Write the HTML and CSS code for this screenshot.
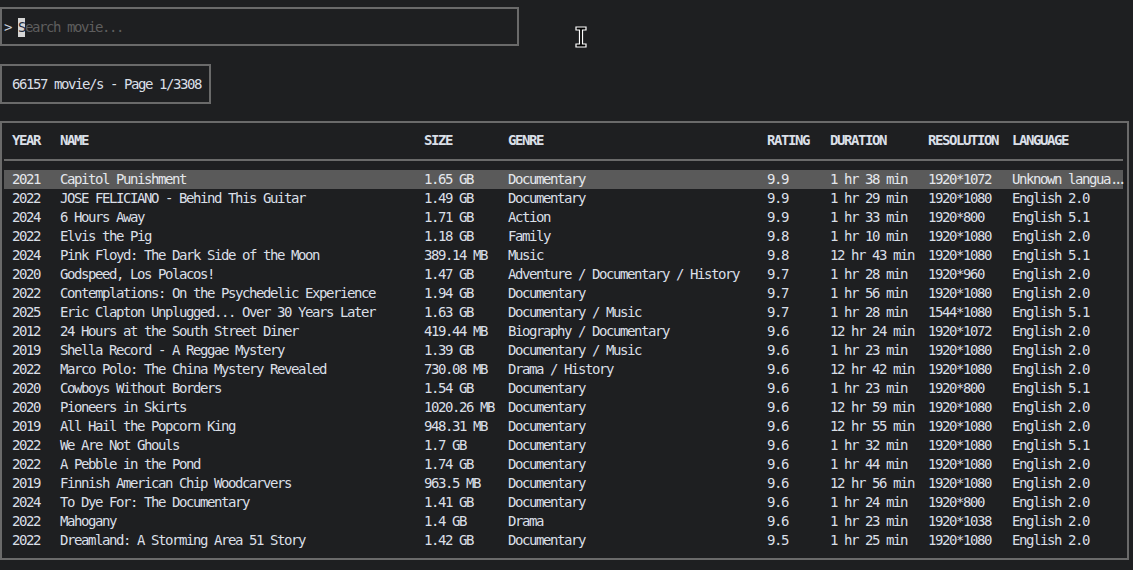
FILE: index.html
```html
<!DOCTYPE html>
<html lang="en">
<head>
<meta charset="utf-8">
<title>Movies</title>
<link rel="stylesheet" href="styles.css">
</head>
<body>
<div class="app">
  <div class="search">
    <span class="prompt">&gt;</span><span class="gap"> </span><span class="cursor">S</span><span class="placeholder">earch movie...</span>
  </div>
  <div class="count">66157 movie/s - Page 1/3308</div>
  <div class="table">
    <div class="row head">
      <span>YEAR</span><span>NAME</span><span>SIZE</span><span>GENRE</span><span>RATING</span><span>DURATION</span><span>RESOLUTION</span><span>LANGUAGE</span>
    </div>
    <div class="sep"></div>
    <div class="body">
      <div class="row selected"><span>2021</span><span>Capitol Punishment</span><span>1.65 GB</span><span>Documentary</span><span>9.9</span><span>1 hr 38 min</span><span>1920*1072</span><span>Unknown langua<span class="dots">...</span></span></div>
      <div class="row"><span>2022</span><span>JOSE FELICIANO - Behind This Guitar</span><span>1.49 GB</span><span>Documentary</span><span>9.9</span><span>1 hr 29 min</span><span>1920*1080</span><span>English 2.0</span></div>
      <div class="row"><span>2024</span><span>6 Hours Away</span><span>1.71 GB</span><span>Action</span><span>9.9</span><span>1 hr 33 min</span><span>1920*800</span><span>English 5.1</span></div>
      <div class="row"><span>2022</span><span>Elvis the Pig</span><span>1.18 GB</span><span>Family</span><span>9.8</span><span>1 hr 10 min</span><span>1920*1080</span><span>English 2.0</span></div>
      <div class="row"><span>2024</span><span>Pink Floyd: The Dark Side of the Moon</span><span>389.14 MB</span><span>Music</span><span>9.8</span><span>12 hr 43 min</span><span>1920*1080</span><span>English 5.1</span></div>
      <div class="row"><span>2020</span><span>Godspeed, Los Polacos!</span><span>1.47 GB</span><span>Adventure / Documentary / History</span><span>9.7</span><span>1 hr 28 min</span><span>1920*960</span><span>English 2.0</span></div>
      <div class="row"><span>2022</span><span>Contemplations: On the Psychedelic Experience</span><span>1.94 GB</span><span>Documentary</span><span>9.7</span><span>1 hr 56 min</span><span>1920*1080</span><span>English 2.0</span></div>
      <div class="row"><span>2025</span><span>Eric Clapton Unplugged... Over 30 Years Later</span><span>1.63 GB</span><span>Documentary / Music</span><span>9.7</span><span>1 hr 28 min</span><span>1544*1080</span><span>English 5.1</span></div>
      <div class="row"><span>2012</span><span>24 Hours at the South Street Diner</span><span>419.44 MB</span><span>Biography / Documentary</span><span>9.6</span><span>12 hr 24 min</span><span>1920*1072</span><span>English 2.0</span></div>
      <div class="row"><span>2019</span><span>Shella Record - A Reggae Mystery</span><span>1.39 GB</span><span>Documentary / Music</span><span>9.6</span><span>1 hr 23 min</span><span>1920*1080</span><span>English 2.0</span></div>
      <div class="row"><span>2022</span><span>Marco Polo: The China Mystery Revealed</span><span>730.08 MB</span><span>Drama / History</span><span>9.6</span><span>12 hr 42 min</span><span>1920*1080</span><span>English 2.0</span></div>
      <div class="row"><span>2020</span><span>Cowboys Without Borders</span><span>1.54 GB</span><span>Documentary</span><span>9.6</span><span>1 hr 23 min</span><span>1920*800</span><span>English 5.1</span></div>
      <div class="row"><span>2020</span><span>Pioneers in Skirts</span><span>1020.26 MB</span><span>Documentary</span><span>9.6</span><span>12 hr 59 min</span><span>1920*1080</span><span>English 2.0</span></div>
      <div class="row"><span>2019</span><span>All Hail the Popcorn King</span><span>948.31 MB</span><span>Documentary</span><span>9.6</span><span>12 hr 55 min</span><span>1920*1080</span><span>English 2.0</span></div>
      <div class="row"><span>2022</span><span>We Are Not Ghouls</span><span>1.7 GB</span><span>Documentary</span><span>9.6</span><span>1 hr 32 min</span><span>1920*1080</span><span>English 5.1</span></div>
      <div class="row"><span>2022</span><span>A Pebble in the Pond</span><span>1.74 GB</span><span>Documentary</span><span>9.6</span><span>1 hr 44 min</span><span>1920*1080</span><span>English 2.0</span></div>
      <div class="row"><span>2019</span><span>Finnish American Chip Woodcarvers</span><span>963.5 MB</span><span>Documentary</span><span>9.6</span><span>12 hr 56 min</span><span>1920*1080</span><span>English 2.0</span></div>
      <div class="row"><span>2024</span><span>To Dye For: The Documentary</span><span>1.41 GB</span><span>Documentary</span><span>9.6</span><span>1 hr 24 min</span><span>1920*800</span><span>English 2.0</span></div>
      <div class="row"><span>2022</span><span>Mahogany</span><span>1.4 GB</span><span>Drama</span><span>9.6</span><span>1 hr 23 min</span><span>1920*1038</span><span>English 2.0</span></div>
      <div class="row"><span>2022</span><span>Dreamland: A Storming Area 51 Story</span><span>1.42 GB</span><span>Documentary</span><span>9.5</span><span>1 hr 25 min</span><span>1920*1080</span><span>English 2.0</span></div>
    </div>
  </div>
  <svg class="ibeam" width="12" height="22" viewBox="0 0 12 22" aria-hidden="true">
    <path d="M1 1h10v3H7.5v14H11v3H1v-3h3.5V4H1z" fill="#000" stroke="#fff" stroke-width="1.2"/>
  </svg>
</div>
</body>
</html>
```

FILE: styles.css
```css
* {
  box-sizing: border-box;
}

html,
body {
  margin: 0;
  background: #1e1f21;
}

body {
  padding-top: 7px;
  font-family: "DejaVu Sans Mono", "Liberation Mono", monospace;
  font-size: 14px;
  letter-spacing: -1.43px;
  line-height: 19px;
  color: #dadfe7;
}

.app {
  position: relative;
  width: 1133px;
  height: 563px;
}

.search {
  width: 519px;
  height: 39px;
  border: 2px solid #6a6a6a;
  display: flex;
  align-items: center;
  padding-left: 2px;
  padding-top: 1px;
  white-space: pre;
}

.prompt {
  color: #c8d0dc;
}

.gap {
  display: inline-block;
  width: 7px;
}

.cursor {
  display: inline-block;
  width: 7px;
  height: 19px;
  background: #d6d6d6;
  color: #1e2a3a;
}

.placeholder {
  color: #5e5e5e;
}

.count {
  margin-top: 18px;
  width: 211px;
  height: 40px;
  border: 2px solid #6a6a6a;
  display: flex;
  align-items: center;
  padding-left: 10px;
  white-space: pre;
}

.table {
  margin-top: 17px;
  width: 1129px;
  height: 439px;
  border: 2px solid #6a6a6a;
  padding: 8px 2px 0 2px;
}

.row {
  display: grid;
  grid-template-columns: 48px 364px 84px 259px 63px 98px 84px 1fr;
  height: 19px;
  padding-left: 8px;
  margin-right: 2px;
  white-space: pre;
}

.head {
  font-weight: bold;
  color: #dadfe7;
}

.sep {
  height: 2px;
  background: #6a6a6a;
  margin: 9px 2px 0 0;
}

.body {
  margin-top: 9px;
}

.selected {
  background: #5a5a5a;
  color: #e4e7ec;
}

.dots {
  letter-spacing: -4.4px;
}

.ibeam {
  position: absolute;
  left: 575px;
  top: 19px;
}
```
